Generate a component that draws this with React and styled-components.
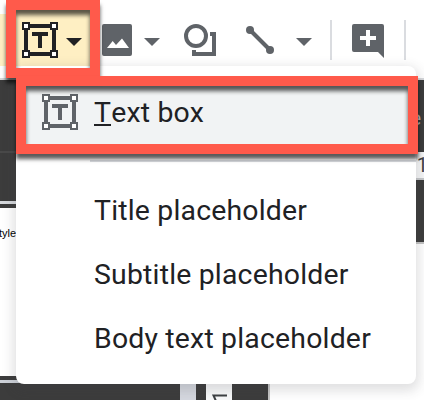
import React from "react";
import styled, { createGlobalStyle } from "styled-components";

const Global = createGlobalStyle`
  * { box-sizing: border-box; }
  body { margin: 0; background: #fff; overflow: hidden; }
`;

const Screen = styled.div`
  position: relative;
  width: 424px;
  height: 400px;
  overflow: hidden;
  background: #fff;
  font-family: Roboto, sans-serif;
  display: flex;
  flex-direction: column;
`;

const Toolbar = styled.header`
  flex: none;
  height: 80px;
  padding-top: 14px;
  display: flex;
  align-items: flex-start;
  border-bottom: 2px solid #d5d7da;
  background: #fff;
`;

const Tool = styled.div`
  flex: none;
  width: ${(p) => p.$width}px;
  height: 52px;
  display: flex;
  background: ${(p) => (p.$active ? "#feefc3" : "transparent")};
  box-shadow: ${(p) => (p.$active ? "0 -4px #feefc3" : "none")};
  clip-path: ${(p) => (p.$active ? "polygon(0 0, 16px 0, 16px -4px, 100% -4px, 100% 100%, 0 100%)" : "none")};
  svg { display: block; }
`;

const Divider = styled.div`
  flex: none;
  width: 2px;
  height: 40px;
  margin-top: 6px;
  background: #dadce0;
`;

const Workspace = styled.main`
  flex: 1;
  min-height: 0;
  display: grid;
  grid-template-columns: 180px 16px 10px 26px 36px 2px 1fr;
  grid-template-rows: 72px 50px 1fr;
  background: #3c3c3c;
`;

const LeftPane = styled.section`
  grid-column: 1;
  grid-row: 1 / 4;
  display: flex;
  flex-direction: column;
`;

const Strip = styled.div`
  flex: none;
  height: ${(p) => p.$height}px;
  background: ${(p) => p.$color};
`;

const Slide = styled.div`
  flex: none;
  height: 168px;
  background: #fff;
  padding-top: 17px;
  font: 11px/16px "Liberation Sans", Arial, sans-serif;
  color: #000;
  span { display: block; margin-left: -1px; }
`;

const Gutter = styled.div`
  grid-column: ${(p) => p.$column};
  grid-row: 3;
  background: ${(p) => p.$color};
`;

const VerticalRuler = styled(Gutter)`
  display: flex;
  align-items: flex-end;
  svg { display: block; }
`;

const RightPane = styled.section`
  grid-column: 7;
  grid-row: 1 / 4;
  display: flex;
  flex-direction: column;
`;

const PaneTitle = styled.div`
  flex: none;
  height: 72px;
  padding: 28px 3px 0 0;
  text-align: right;
  font-size: 20px;
  line-height: 20px;
  color: #c4c4c4;
  background: #3c3c3c;
`;

const Ruler = styled.div`
  flex: none;
  height: 28px;
  display: flex;
  justify-content: flex-end;
  background: #f6f7f8;
  border-bottom: 2px solid #c6c8ca;
  font-size: 20px;
  line-height: 27px;
  color: #3c4043;
  span { margin-right: -4px; }
`;

const Canvas = styled.div`
  flex: 1;
  background: #fff;
`;

const Menu = styled.nav`
  position: absolute;
  left: 16px;
  top: 66px;
  width: 400px;
  height: 318px;
  padding: 14px 0;
  border-radius: 8px;
  background: #fff;
  box-shadow: 0 4px 12px 3px rgba(60, 64, 67, 0.16);
`;

const MenuItem = styled.div`
  height: 64px;
  padding-left: ${(p) => (p.$icon ? 26 : 78)}px;
  display: flex;
  align-items: center;
  gap: 16px;
  font-size: 28.4px;
  line-height: 36px;
  letter-spacing: 0.2px;
  white-space: pre;
  color: #202124;
  background: ${(p) => (p.$active ? "#f1f3f4" : "#fff")};
  svg { display: block; flex: none; }
`;

const Label = styled.span`
  display: block;
  height: 36px;
  margin-top: 2px;
`;

const MenuLine = styled.div`
  height: 2px;
  margin: 16px 0 16px 74px;
  background: #dadce0;
`;

const Mnemonic = styled.span`
  display: inline-block;
  height: 30px;
  line-height: 34px;
  border-bottom: 2px solid #202124;
`;

const Highlight = styled.div`
  position: absolute;
  left: ${(p) => p.$x}px;
  top: ${(p) => p.$y}px;
  width: ${(p) => p.$w}px;
  height: ${(p) => p.$h}px;
  border: 10px solid #ff5a4b;
  box-shadow: 0 5px 4px rgba(0, 0, 0, 0.65), inset 0 5px 4px rgba(0, 0, 0, 0.65);
  pointer-events: none;
`;

const Caret = ({ x, y = 24, color = "#5f6368" }) => (
  <path d={`M${x} ${y}h16l-8 8z`} fill={color} />
);

const TextBoxIcon = ({ color, fill }) => (
  <svg width="36" height="36" viewBox="0 0 36 36">
    <path d="M4 4H32V32H4Z" fill="none" stroke={color} strokeWidth="4" />
    {[[1, 1], [29, 1], [1, 29], [29, 29]].map(([x, y]) => (
      <rect key={`${x}-${y}`} x={x} y={y} width="6" height="6" fill={fill} stroke={color} strokeWidth="2" />
    ))}
    <path d="M10 10h16v4h-6v12h-4V14h-6z" fill={color} />
  </svg>
);

export default function App() {
  return (
    <>
      <Global />
      <Screen>
        <Toolbar>
          <Tool $width={98} $active>
            <svg width="98" height="52">
              <g transform="translate(22 8)">
                <TextBoxIcon color="#202124" fill="#fff" />
              </g>
              <Caret x={66} color="#202124" />
            </svg>
          </Tool>
          <Tool $width={76}>
            <svg width="76" height="52">
              <path fillRule="evenodd" fill="#5f6368" d="M6 10h26a2 2 0 0 1 2 2v28a2 2 0 0 1-2 2H6a2 2 0 0 1-2-2V12a2 2 0 0 1 2-2zM9 34h22l-7-9.500-6 6.500-3.300-4z" />
              <Caret x={46} />
            </svg>
          </Tool>
          <Tool $width={60}>
            <svg width="60" height="52" fill="none" stroke="#5f6368" strokeWidth="4">
              <circle cx="22" cy="22" r="10" />
              <path d="M36 20H40V40H20V36" />
            </svg>
          </Tool>
          <Tool $width={96}>
            <svg width="96" height="52">
              <path d="M16 16 36 36" stroke="#5f6368" strokeWidth="4" />
              <circle cx="16" cy="16" r="4" fill="#5f6368" />
              <circle cx="36" cy="36" r="4" fill="#5f6368" />
              <Caret x={62} />
            </svg>
          </Tool>
          <Divider />
          <Tool $width={72}>
            <svg width="72" height="52">
              <path d="M22 10h28a2 2 0 0 1 2 2v32l-6-6H22a2 2 0 0 1-2-2V12a2 2 0 0 1 2-2z" fill="#5f6368" />
              <path d="M28 24H44M36 16V32" stroke="#fff" strokeWidth="4" />
            </svg>
          </Tool>
          <Divider />
        </Toolbar>
        <Workspace>
          <LeftPane>
            <Strip $height={71} $color="#3c3c3c" />
            <Strip $height={2} $color="#494949" />
            <Strip $height={48} $color="#3c3c3c" />
            <Strip $height={3} $color="#d5d8dc" />
            <Strip $height={4} $color="#3c3c3c" />
            <Slide><span>tyle</span></Slide>
            <Strip $height={4} $color="#3c3c3c" />
            <Strip $height={3} $color="#cdd1d8" />
          </LeftPane>
          <Gutter $column={2} $color="#d5d8df" />
          <VerticalRuler $column={4} $color="#f8f9fa">
            <svg width="26" height="6">
              <path d="M21 1.500H7.500L10 7" fill="none" stroke="#3c4043" strokeWidth="2" />
            </svg>
          </VerticalRuler>
          <Gutter $column={6} $color="#c4c4c4" />
          <RightPane>
            <PaneTitle>e</PaneTitle>
            <Ruler><span>1</span></Ruler>
            <Strip $height={62} $color="#3c3c3c" />
            <Strip $height={2} $color="#c4c4c4" />
            <Canvas />
          </RightPane>
        </Workspace>
        <Menu>
          <MenuItem $icon $active>
            <TextBoxIcon color="#5f6368" fill="#fff" />
            <Label><Mnemonic>T</Mnemonic>ext box</Label>
          </MenuItem>
          <MenuLine />
          <MenuItem><Label>Title placeholder</Label></MenuItem>
          <MenuItem><Label>Subtitle placeholder</Label></MenuItem>
          <MenuItem><Label>Body text placeholder</Label></MenuItem>
        </Menu>
        <Highlight $x={6} $y={0} $w={94} $h={78} />
        <Highlight $x={16} $y={76} $w={402} $h={78} />
      </Screen>
    </>
  );
}
